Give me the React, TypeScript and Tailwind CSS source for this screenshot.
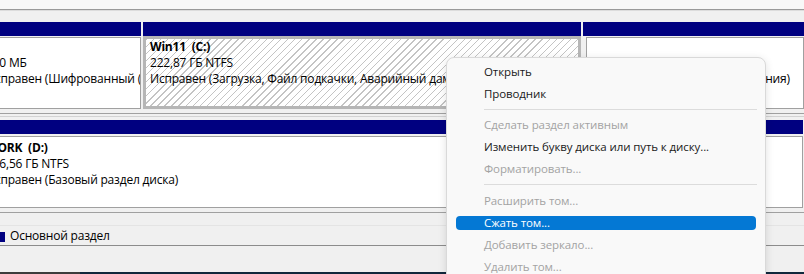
import React from "react";

const Navy = () => <div className="h-[14px] bg-[#000080]" />;

const MenuItem = ({ label, disabled }: { label: string; disabled?: boolean }) => (
  <div
    className={`h-[22px] flex items-center pl-[37px] whitespace-nowrap ${
      disabled ? "text-[#a3a3a3]" : "text-[#1a1a1a]"
    }`}
  >
    {label}
  </div>
);

export default function App() {
  return (
    <div className="relative w-[804px] h-[274px] overflow-hidden bg-[#f0f0f0] font-['Open_Sans',sans-serif] text-[12px] leading-[16px] tracking-[-0.2px] text-black flex flex-col">
      {/* top strip */}
      <div className="h-[9px] shrink-0 bg-[#f8f8f8]" />
      <div className="h-px shrink-0 bg-[#9a9a9a]" />
      <div className="h-px shrink-0 bg-[#dcdcdc]" />
      <div className="h-[11px] shrink-0" />

      {/* row 1 */}
      <div className="flex h-[87px] shrink-0 ml-[-21px] gap-[2px]">
        <div className="w-[162px] shrink-0 flex flex-col">
          <Navy />
          <div className="mt-[1px] h-[72px] border border-[#a0a0a0] bg-white pl-[6px] pt-[1px] whitespace-nowrap overflow-hidden">
            <div className="h-[16px]" />
            <div>100 МБ</div>
            <div>Исправен (Шифрованный (EFI) системный раздел)</div>
          </div>
        </div>
        <div className="w-[438px] shrink-0 flex flex-col">
          <Navy />
          <div className="h-[73px] border-[3px] border-[#b6b6b6] bg-[repeating-linear-gradient(135deg,#c4c4c4_0px,#c4c4c4_1px,#ffffff_1px,#ffffff_5px)] pl-[4px] whitespace-nowrap overflow-hidden">
            <div className="font-bold">Win11&nbsp;&nbsp;(C:)</div>
            <div>222,87 ГБ NTFS</div>
            <div>Исправен (Загрузка, Файл подкачки, Аварийный дамп памяти, Основной раздел)</div>
          </div>
        </div>
        <div className="flex-1 flex flex-col">
          <Navy />
          <div className="mt-[1px] ml-[3px] h-[72px] border border-[#a0a0a0] bg-white pl-[3px] pt-[1px] whitespace-nowrap overflow-hidden">
            <div className="h-[16px]" />
            <div>750 МБ NTFS</div>
            <div>Исправен (Раздел восстановления)</div>
          </div>
        </div>
      </div>

      {/* separator between rows */}
      <div className="h-[4px] shrink-0" />
      <div className="h-px shrink-0 bg-[#a0a0a0]" />
      <div className="h-[2px] shrink-0" />
      <div className="h-px shrink-0 bg-[#d2d2d2]" />
      <div className="h-[3px] shrink-0" />

      {/* row 2 */}
      <div className="flex flex-col h-[88px] shrink-0 ml-[-21px] w-[824px]">
        <Navy />
        <div className="mt-[2px] h-[72px] border border-[#a0a0a0] bg-white pl-[6px] pt-[3px] whitespace-nowrap overflow-hidden">
          <div className="font-bold">WORK&nbsp;&nbsp;(D:)</div>
          <div>476,56 ГБ NTFS</div>
          <div>Исправен (Базовый раздел диска)</div>
        </div>
      </div>

      <div className="h-[4px] shrink-0" />
      <div className="h-px shrink-0 bg-[#a0a0a0]" />
      <div className="h-[12px] shrink-0" />
      <div className="h-px shrink-0 bg-[#e4e4e4]" />

      {/* legend */}
      <div className="h-[19px] shrink-0 flex items-center bg-[#f0f0f0]">
        <div className="w-[5px] h-[10px] bg-[#000080] mt-[2px]" />
        <span className="ml-[5px] mt-[1px]">Основной раздел</span>
      </div>
      <div className="h-px shrink-0 bg-[#8c8c8c]" />
      <div className="flex-1" />
      <div className="h-[2px] shrink-0 flex">
        <div className="w-[80px] bg-[#3c3c3c]" />
        <div className="flex-1 bg-[#10283c]" />
      </div>

      {/* context menu */}
      <div className="absolute left-[446px] top-[57px] w-[320px] h-[260px] rounded-[8px] border border-[#d9d9d9] bg-[#f9f9f9] shadow-[0_2px_8px_rgba(0,0,0,0.12)] pt-[3px] text-[11.5px] tracking-[-0.1px]">
        <MenuItem label="Открыть" />
        <MenuItem label="Проводник" />
        <div className="h-[9px] pt-[4px] pl-[37px] pr-[8px]">
          <div className="h-px bg-[#dcdcdc]" />
        </div>
        <MenuItem label="Сделать раздел активным" disabled />
        <MenuItem label="Изменить букву диска или путь к диску..." />
        <MenuItem label="Форматировать..." disabled />
        <div className="h-[10px] pt-[4px] pl-[37px] pr-[8px]">
          <div className="h-px bg-[#dcdcdc]" />
        </div>
        <MenuItem label="Расширить том..." disabled />
        <div className="h-[22px] flex items-center px-[9px]">
          <div className="h-[14px] w-full rounded-[4px] bg-[#0478d4] pl-[28px] flex items-center text-white whitespace-nowrap">
            Сжать том...
          </div>
        </div>
        <MenuItem label="Добавить зеркало..." disabled />
        <MenuItem label="Удалить том..." disabled />
      </div>
    </div>
  );
}
